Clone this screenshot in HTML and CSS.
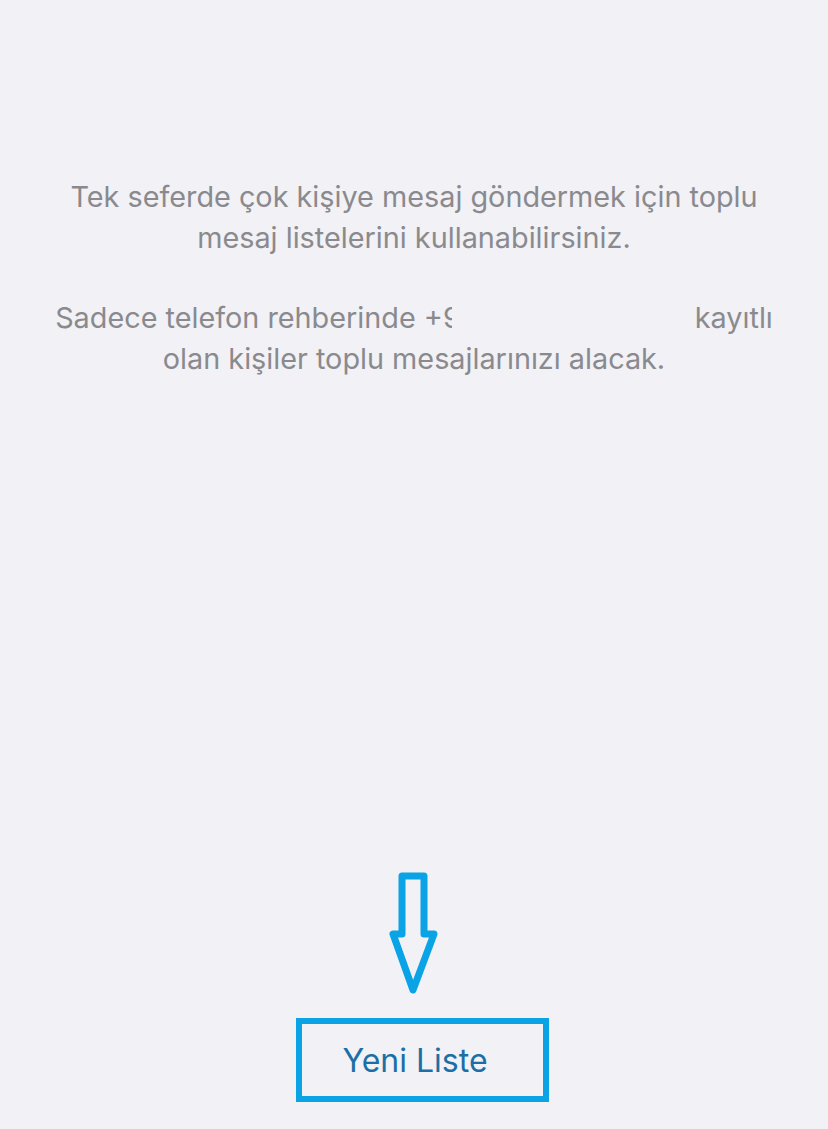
FILE: index.html
```html
<!DOCTYPE html>
<html lang="tr">
<head>
<meta charset="utf-8">
<link rel="stylesheet" href="styles.css">
</head>
<body>
<main class="screen">
  <section class="info">
    <p class="para">Tek seferde çok kişiye mesaj göndermek için toplu<br>mesaj listelerini kullanabilirsiniz.</p>
    <p class="para">Sadece telefon rehberinde +9<span class="redact"></span>kayıtlı<br>olan kişiler toplu mesajlarınızı alacak.</p>
  </section>
  <section class="action">
    <svg class="arrow" width="60" height="124" viewBox="0 0 60 124">
      <path d="M18 4 H40 V62 H50 L29 118 L9 62 H18 Z" fill="none" stroke="#0aa3e5" stroke-width="7" stroke-linejoin="round"/>
    </svg>
    <div class="btn-box"><span class="btn-text">Yeni Liste</span></div>
  </section>
</main>
</body>
</html>
```
FILE: styles.css
```css
html, body {
  margin: 0;
  padding: 0;
  background: #f1f1f6;
}
.screen {
  width: 828px;
  height: 1129px;
  display: flex;
  flex-direction: column;
  font-family: Inter, "Noto Sans", sans-serif;
}
.info {
  padding-top: 177px;
  display: flex;
  flex-direction: column;
  align-items: center;
  gap: 40px;
}
.para {
  margin: 0;
  text-align: center;
  color: #8a8a8e;
  font-size: 28.8px;
  line-height: 40.5px;
  white-space: nowrap;
}
.redact {
  display: inline-block;
  width: 243px;
  height: 40px;
  margin-left: -9px;
  vertical-align: top;
  background: #f1f1f6;
}
.action {
  margin-top: auto;
  padding-bottom: 27px;
  display: flex;
  flex-direction: column;
  align-items: center;
  gap: 22px;
}
.arrow {
  display: block;
  margin-left: 0;
}
.btn-box {
  width: 241px;
  height: 72px;
  border: 6px solid #0aa3e5;
  display: flex;
  align-items: center;
  justify-content: center;
  margin-left: 16px;
}
.btn-text {
  color: #1b6fa6;
  font-size: 32px;
  margin-left: -14px;
}
```
